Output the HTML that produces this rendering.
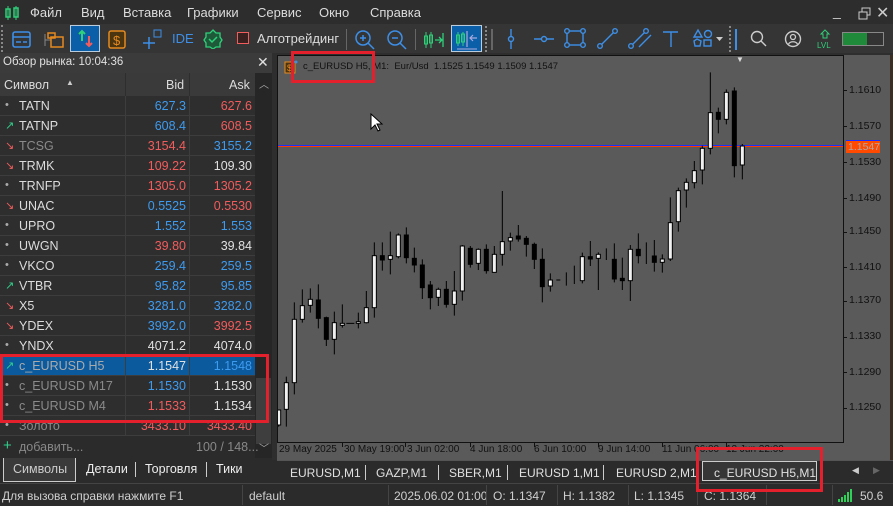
<!DOCTYPE html>
<html><head><meta charset="utf-8"><style>
*{margin:0;padding:0;box-sizing:border-box}
body{width:893px;height:506px;overflow:hidden;background:#2b2b2b;font-family:"Liberation Sans","DejaVu Sans",sans-serif;font-size:12px;color:#dcdcdc;position:relative}
.a{position:absolute;white-space:nowrap}
.menu span{position:absolute;top:5px;font-size:13px;color:#dcdcdc}
.row{position:absolute;left:0;width:255px;height:20px;border-bottom:1px solid #3d3d3d;background:#2e2e2e}
.row .s{position:absolute;left:19px;top:3px;font-size:12.5px}
.row .b{position:absolute;right:69px;top:3px;font-size:12.5px}
.row .k{position:absolute;right:3px;top:3px;font-size:12.5px}
.row .i{position:absolute;left:5px;top:3px;font-size:11px}
.row:before{content:"";position:absolute;left:125px;top:0;width:1px;height:20px;background:#3d3d3d}
.row:after{content:"";position:absolute;left:189px;top:0;width:1px;height:20px;background:#3d3d3d}
.bl{color:#3d9bf0}.rd{color:#f25c5c}.wh{color:#e0e0e0}.gr{color:#8a8a8a}
.dot{color:#aaa}.up{color:#2fcf8a}.dn{color:#f25c5c}
.pl{position:absolute;left:849px;font-size:10.5px;color:#111;font-family:"Liberation Sans",sans-serif}
.tl{position:absolute;top:444px;font-size:10px;color:#111;font-family:"Liberation Sans",sans-serif}
.ct{position:absolute;top:466px;font-size:12px;color:#e0e0e0}
.st{position:absolute;top:489px;font-size:12px;color:#cfcfcf}
.red{position:absolute;border:3px solid #e3202b}
</style></head><body>
<!-- menu -->
<div class="a" style="left:0;top:0;width:893px;height:27px;background:#2d2d2d"></div>
<svg class="a" style="left:5px;top:6px" width="14" height="14"><rect x="1" y="3" width="4" height="8" fill="none" stroke="#2fd07a" stroke-width="1.5"/><rect x="9" y="2" width="4" height="9" fill="none" stroke="#2fd07a" stroke-width="1.5"/><path d="M3 0v14M11 0v14" stroke="#2fd07a"/></svg>
<div class="menu"><span style="left:30px">Файл</span><span style="left:81px">Вид</span><span style="left:123px">Вставка</span><span style="left:187px">Графики</span><span style="left:257px">Сервис</span><span style="left:319px">Окно</span><span style="left:370px">Справка</span></div>
<div class="a" style="left:833px;top:3px;font-size:14px;color:#ccc">_</div>
<svg class="a" style="left:858px;top:7px" width="14" height="14"><rect x="4" y="1" width="8" height="7" fill="none" stroke="#ccc"/><rect x="1" y="5" width="8" height="7" fill="#2d2d2d" stroke="#ccc"/></svg>
<div class="a" style="left:876px;top:3px;font-size:16px;color:#ccc">✕</div>
<!-- toolbar -->
<div class="a" style="left:0;top:24px;width:893px;height:29px;background:#353535"></div>
<div class="a" style="left:1px;top:25px;height:27px;border-left:2px dotted #888"></div>
<svg class="a" style="left:12px;top:30px" width="20" height="20"><rect x="1" y="2" width="17" height="15" rx="2" fill="none" stroke="#3d8fe8" stroke-width="1.6"/><path d="M1 7h17M4 12h5M11 12h4" stroke="#3d8fe8" stroke-width="1.6"/></svg>
<svg class="a" style="left:43px;top:30px" width="22" height="20"><path d="M2 4v12M2 10h6" stroke="#888"/><rect x="8" y="7" width="12" height="10" fill="none" stroke="#e58a1f" stroke-width="1.5"/><rect x="5" y="3" width="7" height="5" fill="none" stroke="#e58a1f" stroke-width="1.5"/></svg>
<div class="a" style="left:70px;top:25px;width:30px;height:27px;background:#0b5ea8;border:1px solid #bcd"></div>
<svg class="a" style="left:76px;top:29px" width="20" height="20"><path d="M6 2v10M3 5l3-3 3 3" stroke="#2fd07a" stroke-width="2" fill="none"/><path d="M13 7v10M10 14l3 3 3-3" stroke="#f25c5c" stroke-width="2" fill="none"/></svg>
<svg class="a" style="left:108px;top:30px" width="20" height="20"><rect x="1" y="1" width="16" height="17" rx="2" fill="#4a3510" stroke="#e58a1f" stroke-width="1.5"/><text x="5" y="15" font-size="13" fill="#e58a1f" font-family="Liberation Sans">$</text></svg>
<svg class="a" style="left:142px;top:29px" width="22" height="22"><path d="M1 14h12M7 8v12" stroke="#3d8fe8" stroke-width="1.5"/><rect x="12" y="1" width="7" height="7" fill="none" stroke="#3d8fe8"/></svg>
<div class="a" style="left:172px;top:31px;font-size:13px;color:#3d8fe8">IDE</div>
<svg class="a" style="left:203px;top:29px" width="20" height="20"><path d="M10 1l3 3h4v4l2 3-2 3v4h-4l-3 2-3-2H3v-4l-2-3 2-3V4h4z" fill="#1e5a3a" stroke="#2fd07a" stroke-width="1.3"/><path d="M6 10l3 3 5-5" stroke="#2fd07a" stroke-width="1.5" fill="none"/></svg>
<div class="a" style="left:237px;top:32px;width:12px;height:12px;border:1.5px solid #f25c5c;background:#3b2020"></div>
<div class="a" style="left:257px;top:31px;font-size:13px;color:#dcdcdc">Алготрейдинг</div>
<div class="a" style="left:346px;top:29px;width:1px;height:21px;background:#666"></div>
<svg class="a" style="left:354px;top:29px" width="22" height="22"><circle cx="9" cy="9" r="7" fill="none" stroke="#3d8fe8" stroke-width="1.5"/><path d="M14 14l6 6M6 9h6M9 6v6" stroke="#3d8fe8" stroke-width="1.5"/></svg>
<svg class="a" style="left:386px;top:29px" width="22" height="22"><circle cx="9" cy="9" r="7" fill="none" stroke="#3d8fe8" stroke-width="1.5"/><path d="M14 14l6 6M6 9h6" stroke="#3d8fe8" stroke-width="1.5"/></svg>
<div class="a" style="left:415px;top:29px;width:1px;height:21px;background:#666"></div>
<svg class="a" style="left:423px;top:29px" width="22" height="22"><path d="M3 3v16M8 3v16" stroke="#2fd07a"/><rect x="1.5" y="7" width="3" height="8" fill="none" stroke="#2fd07a"/><rect x="6.5" y="6" width="3" height="8" fill="none" stroke="#2fd07a"/><path d="M12 11h7M16 8l3 3-3 3M20 4v14" stroke="#2fd07a" stroke-width="1.3" fill="none"/></svg>
<div class="a" style="left:451px;top:25px;width:31px;height:27px;background:#0b5ea8;border:1px solid #bcd"></div>
<svg class="a" style="left:455px;top:29px" width="24" height="22"><path d="M3 3v14M8 3v14" stroke="#2fd07a"/><rect x="1.5" y="6" width="3" height="8" fill="none" stroke="#2fd07a"/><rect x="6.5" y="5" width="3" height="8" fill="none" stroke="#2fd07a"/><path d="M12 2v16M15 9h7M18 6l-3 3 3 3" stroke="#aad" stroke-width="1.2" fill="none"/><path d="M2 20h20" stroke="#aad"/></svg>
<div class="a" style="left:485px;top:26px;height:26px;border-left:2px dotted #888"></div>
<div class="a" style="left:491px;top:29px;width:2px;height:21px;background:#666"></div>
<svg class="a" style="left:500px;top:27px" width="350" height="24"><g stroke="#3d8fe8" stroke-width="1.4" fill="none">
<path d="M11 2v20"/><circle cx="11" cy="12" r="2.5" fill="#353535"/>
<path d="M34 12h20"/><circle cx="44" cy="12" r="2.5" fill="#353535"/>
<rect x="67" y="4" width="16" height="14"/><circle cx="67" cy="4" r="2.3" fill="#353535"/><circle cx="83" cy="4" r="2.3" fill="#353535"/><circle cx="67" cy="18" r="2.3" fill="#353535"/><circle cx="83" cy="18" r="2.3" fill="#353535"/>
<path d="M100 19l15-15"/><circle cx="100" cy="19" r="2.3" fill="#353535"/><circle cx="115" cy="4" r="2.3" fill="#353535"/>
<path d="M131 19l15-15M139 20l12-12"/><circle cx="131" cy="19" r="2.3" fill="#353535"/><circle cx="146" cy="4" r="2.3" fill="#353535"/>
<path d="M163 5h15M171 5v15"/>
<path d="M194 10l4-7 4 7z"/><circle cx="208" cy="7" r="3.5"/><path d="M194 14l3-2 4 2-1 5h-5z"/><rect x="204" y="13" width="7" height="6"/>
</g><path d="M216 10h7l-3.5 4z" fill="#ccc"/></svg>
<div class="a" style="left:729px;top:26px;height:26px;border-left:2px dotted #888"></div>
<div class="a" style="left:735px;top:29px;width:2px;height:21px;background:#3d8fe8"></div>
<svg class="a" style="left:750px;top:30px" width="18" height="18"><circle cx="7" cy="7" r="5.5" fill="none" stroke="#ccc" stroke-width="1.4"/><path d="M11 11l5 5" stroke="#ccc" stroke-width="1.4"/></svg>
<svg class="a" style="left:784px;top:30px" width="18" height="18"><circle cx="9" cy="9" r="7.5" fill="none" stroke="#ccc" stroke-width="1.4"/><circle cx="9" cy="7" r="2.5" fill="none" stroke="#ccc" stroke-width="1.3"/><path d="M4.5 14c2-3 7-3 9 0" stroke="#ccc" stroke-width="1.3" fill="none"/></svg>
<svg class="a" style="left:816px;top:29px" width="18" height="20"><path d="M9 1l4 4h-2v4H7V5H5z" fill="none" stroke="#2fd07a"/><text x="1" y="19" font-size="8" fill="#2fd07a" font-family="Liberation Sans">LVL</text></svg>
<div class="a" style="left:842px;top:32px;width:42px;height:14px;border:1px solid #888;background:#333"><div style="width:24px;height:12px;background:#1e8a3a"></div></div>
<!-- market watch -->
<div class="a" style="left:0;top:53px;width:272px;height:20px;background:#3b3b3b"></div>
<div class="a" style="left:3px;top:56px;font-size:11.5px;color:#e0e0e0">Обзор рынка: 10:04:36</div>
<div class="a" style="left:257px;top:54px;font-size:14px;color:#e0e0e0">✕</div>
<div class="a" style="left:0;top:73px;width:272px;height:23px;background:#3a3a3a"></div>
<div class="a" style="left:4px;top:78px;font-size:12.5px">Символ</div>
<div class="a" style="left:66px;top:78px;font-size:8px;color:#ccc">▲</div>
<div class="a" style="left:125px;top:73px;width:1px;height:23px;background:#2e2e2e"></div>
<div class="a" style="left:189px;top:73px;width:1px;height:23px;background:#2e2e2e"></div>
<div class="a" style="left:166px;top:78px;font-size:12.5px">Bid</div>
<div class="a" style="left:229px;top:78px;font-size:12.5px">Ask</div>
<div class="a" style="left:255px;top:73px;width:17px;height:385px;background:#262626"></div>
<div class="a" style="left:259px;top:76px;font-size:10px;color:#aaa">︿</div>
<div class="a" style="left:256px;top:378px;width:15px;height:66px;background:#3e3e3e"></div>
<div class="a" style="left:259px;top:440px;font-size:10px;color:#aaa">﹀</div>

<div class="row" style="top:96px"><span class="i dot">•</span><span class="s">TATN</span><span class="b bl">627.3</span><span class="k rd">627.6</span></div>
<div class="row" style="top:116px"><span class="i up">↗</span><span class="s">TATNP</span><span class="b bl">608.4</span><span class="k rd">608.5</span></div>
<div class="row" style="top:136px"><span class="i dn">↘</span><span class="s gr">TCSG</span><span class="b rd">3154.4</span><span class="k bl">3155.2</span></div>
<div class="row" style="top:156px"><span class="i dn">↘</span><span class="s">TRMK</span><span class="b rd">109.22</span><span class="k wh">109.30</span></div>
<div class="row" style="top:176px"><span class="i dot">•</span><span class="s">TRNFP</span><span class="b rd">1305.0</span><span class="k rd">1305.2</span></div>
<div class="row" style="top:196px"><span class="i dn">↘</span><span class="s">UNAC</span><span class="b bl">0.5525</span><span class="k rd">0.5530</span></div>
<div class="row" style="top:216px"><span class="i dot">•</span><span class="s">UPRO</span><span class="b bl">1.552</span><span class="k bl">1.553</span></div>
<div class="row" style="top:236px"><span class="i dot">•</span><span class="s">UWGN</span><span class="b rd">39.80</span><span class="k wh">39.84</span></div>
<div class="row" style="top:256px"><span class="i dot">•</span><span class="s">VKCO</span><span class="b bl">259.4</span><span class="k bl">259.5</span></div>
<div class="row" style="top:276px"><span class="i up">↗</span><span class="s">VTBR</span><span class="b bl">95.82</span><span class="k bl">95.85</span></div>
<div class="row" style="top:296px"><span class="i dn">↘</span><span class="s">X5</span><span class="b bl">3281.0</span><span class="k bl">3282.0</span></div>
<div class="row" style="top:316px"><span class="i dn">↘</span><span class="s">YDEX</span><span class="b bl">3992.0</span><span class="k rd">3992.5</span></div>
<div class="row" style="top:336px"><span class="i dot">•</span><span class="s">YNDX</span><span class="b wh">4071.2</span><span class="k wh">4074.0</span></div>
<div class="row" style="top:356px;background:#0b5a9e"><span class="i up">↗</span><span class="s" style="color:#aaa">c_EURUSD H5</span><span class="b wh">1.1547</span><span class="k bl">1.1548</span></div>
<div class="row" style="top:376px"><span class="i dot">•</span><span class="s gr">c_EURUSD M17</span><span class="b bl">1.1530</span><span class="k wh">1.1530</span></div>
<div class="row" style="top:396px"><span class="i dot">•</span><span class="s gr">c_EURUSD M4</span><span class="b rd">1.1533</span><span class="k wh">1.1534</span></div>
<div class="row" style="top:416px"><span class="i dot">•</span><span class="s gr">Золото</span><span class="b rd">3433.10</span><span class="k rd">3433.40</span></div>
<div class="a" style="left:0;top:436px;width:255px;height:22px;background:#2b2b2b"></div>
<div class="a" style="left:3px;top:437px;font-size:15px;color:#2fcf8a">+</div>
<div class="a" style="left:19px;top:440px;font-size:12.5px;color:#888">добавить...</div>
<div class="a" style="left:196px;top:440px;font-size:12.5px;color:#888">100 / 148...</div>
<!-- bottom tabs -->
<div class="a" style="left:0;top:458px;width:272px;height:24px;background:#2b2b2b"></div>
<div class="a" style="left:3px;top:458px;width:73px;height:24px;background:#3a3a3a;border:1px solid #ccc;border-top:none"></div>
<div class="a" style="left:13px;top:462px;font-size:12.5px;color:#ccc">Символы</div>
<div class="a" style="left:86px;top:462px;font-size:12.5px;color:#eee">Детали</div>
<div class="a" style="left:135px;top:462px;width:1px;height:15px;background:#ccc"></div>
<div class="a" style="left:145px;top:462px;font-size:12.5px;color:#eee">Торговля</div>
<div class="a" style="left:206px;top:462px;width:1px;height:15px;background:#ccc"></div>
<div class="a" style="left:216px;top:462px;font-size:12.5px;color:#eee">Тики</div>
<!-- chart -->
<div class="a" style="left:272px;top:53px;width:621px;height:407px;background:#2e2e2e"></div>
<div class="a" style="left:277px;top:55px;width:613px;height:405px;background:#5a5a5a"></div>
<div class="a" style="left:890px;top:55px;width:3px;height:405px;background:#3b2e25"></div>
<div class="a" style="left:843px;top:55px;width:1px;height:388px;background:#111"></div>
<div class="a" style="left:277px;top:55px;width:567px;height:1px;background:#111"></div>
<div class="a" style="left:277px;top:55px;width:1px;height:388px;background:#111"></div>
<div class="a" style="left:277px;top:442px;width:567px;height:1px;background:#111"></div>
<div class="a" style="left:736px;top:55px;font-size:8px;color:#ddd">▼</div>
<svg class="a" style="left:284px;top:60px" width="14" height="14"><rect x="1" y="2" width="10" height="11" fill="#4a3510" stroke="#e58a1f"/><text x="3" y="11" font-size="9" fill="#e58a1f">$</text><circle cx="12" cy="2" r="1.5" fill="#3d8fe8"/></svg>
<div class="a" style="left:303px;top:61px;font-size:9.5px;color:#111">c_EURUSD H5, M1:&nbsp; Eur/Usd&nbsp; 1.1525 1.1549 1.1509 1.1547</div>
<svg class="a" style="left:370px;top:113px" width="14" height="20"><path d="M1 1v15l4-4 3 6 2-1-3-6h5z" fill="#fff" stroke="#000"/></svg>
<div class="a" style="left:278px;top:145px;width:565px;height:1px;background:#1a2fff"></div>
<div class="a" style="left:278px;top:146px;width:565px;height:1px;background:#ff3a00"></div>
<div class="a" style="left:846px;top:140px;width:34px;height:1px;background:#1a2fff"></div>
<div class="a" style="left:846px;top:141px;width:34px;height:12px;background:#ff4a00;color:#aaa;font-size:10.5px;padding-left:2px;line-height:12px">1.1547</div>
<svg class="a" style="left:278px;top:60px" width="480" height="380" viewBox="0 0 1440 1140" stroke="#000" stroke-width="3">
<path d="M2 1050V1100M25 950V1100M49 727V1003M73 688V788M97 685V758M121 673V805M145 770V858M169 755V883M193 733V803M205 790H229M241 758V805M265 693V790M289 547V773M313 547V632M337 515V643M361 520V595M385 502V610M409 563V637M433 598V717M457 663V748M481 683V738M505 663V743M529 633V767M553 555V722M577 558V623M601 565V630M625 553V641M649 558V637M673 393V617M697 518V572M721 495V545M745 528V590M769 548V627M793 565V727M817 640V695M835 660H847M865 637V677M889 617V672M913 578V670M937 543V618M961 577V690M985 565V600M1009 550V667M1033 593V690M1057 555V723M1081 520V610M1105 547V612M1129 540V635M1153 583V638M1177 412V603M1201 383V515M1225 355V443M1249 303V385M1273 257V373M1297 37V283M1321 143V220M1345 88V193M1369 82V352M1393 252V358"/>
<g fill="#f0f0f0">
<rect x="-4" y="1050" width="12" height="45"/><rect x="19" y="968" width="12" height="80"/><rect x="43" y="778" width="12" height="190"/><rect x="67" y="737" width="12" height="41"/><rect x="91" y="718" width="12" height="18"/><rect x="163" y="788" width="12" height="50"/><rect x="187" y="790" width="12" height="6"/><rect x="235" y="785" width="12" height="5"/><rect x="259" y="743" width="12" height="45"/><rect x="283" y="587" width="12" height="156"/><rect x="331" y="587" width="12" height="11"/><rect x="355" y="525" width="12" height="65"/><rect x="475" y="688" width="12" height="24"/><rect x="523" y="693" width="12" height="40"/><rect x="547" y="558" width="12" height="135"/><rect x="595" y="568" width="12" height="42"/><rect x="643" y="583" width="12" height="54"/><rect x="667" y="545" width="12" height="38"/><rect x="691" y="533" width="12" height="10"/><rect x="811" y="660" width="12" height="18"/><rect x="907" y="590" width="12" height="72"/><rect x="955" y="583" width="12" height="12"/><rect x="1051" y="568" width="12" height="94"/><rect x="1147" y="597" width="12" height="10"/><rect x="1171" y="488" width="12" height="109"/><rect x="1195" y="392" width="12" height="93"/><rect x="1219" y="367" width="12" height="23"/><rect x="1243" y="332" width="12" height="36"/><rect x="1267" y="265" width="12" height="65"/><rect x="1291" y="158" width="12" height="107"/><rect x="1339" y="97" width="12" height="81"/><rect x="1387" y="258" width="12" height="57"/>
</g>
<g fill="#000">
<rect x="115" y="720" width="12" height="55"/><rect x="139" y="773" width="12" height="65"/><rect x="307" y="587" width="12" height="13"/><rect x="379" y="525" width="12" height="68"/><rect x="403" y="595" width="12" height="20"/><rect x="427" y="615" width="12" height="68"/><rect x="451" y="675" width="12" height="38"/><rect x="499" y="688" width="12" height="45"/><rect x="571" y="565" width="12" height="48"/><rect x="619" y="568" width="12" height="64"/><rect x="715" y="528" width="12" height="9"/><rect x="739" y="535" width="12" height="18"/><rect x="763" y="553" width="12" height="45"/><rect x="787" y="598" width="12" height="82"/><rect x="931" y="590" width="12" height="7"/><rect x="1003" y="598" width="12" height="59"/><rect x="1027" y="655" width="12" height="7"/><rect x="1075" y="568" width="12" height="19"/><rect x="1123" y="588" width="12" height="19"/><rect x="1315" y="157" width="12" height="21"/><rect x="1363" y="93" width="12" height="224"/>
</g></svg>
<!-- price scale -->
<div class="a" style="left:843px;top:90px;width:4px;height:1px;background:#111"></div><div class="pl" style="top:84px">1.1610</div>
<div class="a" style="left:843px;top:126px;width:4px;height:1px;background:#111"></div><div class="pl" style="top:120px">1.1570</div>
<div class="a" style="left:843px;top:162px;width:4px;height:1px;background:#111"></div><div class="pl" style="top:156px">1.1530</div>
<div class="a" style="left:843px;top:198px;width:4px;height:1px;background:#111"></div><div class="pl" style="top:192px">1.1490</div>
<div class="a" style="left:843px;top:232px;width:4px;height:1px;background:#111"></div><div class="pl" style="top:225px">1.1450</div>
<div class="a" style="left:843px;top:267px;width:4px;height:1px;background:#111"></div><div class="pl" style="top:261px">1.1410</div>
<div class="a" style="left:843px;top:301px;width:4px;height:1px;background:#111"></div><div class="pl" style="top:294px">1.1370</div>
<div class="a" style="left:843px;top:337px;width:4px;height:1px;background:#111"></div><div class="pl" style="top:330px">1.1330</div>
<div class="a" style="left:843px;top:372px;width:4px;height:1px;background:#111"></div><div class="pl" style="top:366px">1.1290</div>
<div class="a" style="left:843px;top:408px;width:4px;height:1px;background:#111"></div><div class="pl" style="top:401px">1.1250</div>
<!-- time axis -->
<div class="tl" style="left:279px">29 May 2025</div>
<div class="a" style="left:342px;top:442px;width:1px;height:5px;background:#111"></div><div class="tl" style="left:344px">30 May 19:00</div>
<div class="a" style="left:405px;top:442px;width:1px;height:5px;background:#111"></div><div class="tl" style="left:407px">3 Jun 02:00</div>
<div class="a" style="left:470px;top:442px;width:1px;height:5px;background:#111"></div><div class="tl" style="left:470px">4 Jun 18:00</div>
<div class="a" style="left:534px;top:442px;width:1px;height:5px;background:#111"></div><div class="tl" style="left:534px">6 Jun 10:00</div>
<div class="a" style="left:598px;top:442px;width:1px;height:5px;background:#111"></div><div class="tl" style="left:598px">9 Jun 14:00</div>
<div class="a" style="left:662px;top:442px;width:1px;height:5px;background:#111"></div><div class="tl" style="left:662px">11 Jun 06:00</div>
<div class="a" style="left:726px;top:442px;width:1px;height:5px;background:#111"></div><div class="tl" style="left:726px">12 Jun 22:00</div>
<!-- chart tabs -->
<div class="a" style="left:277px;top:460px;width:616px;height:23px;background:#2b2b2b;border-top:1px solid #555"></div>
<div class="ct" style="left:290px">EURUSD,M1</div>
<div class="a" style="left:365px;top:465px;width:1px;height:15px;background:#ccc"></div>
<div class="ct" style="left:376px">GAZP,M1</div>
<div class="a" style="left:438px;top:465px;width:1px;height:15px;background:#ccc"></div>
<div class="ct" style="left:449px">SBER,M1</div>
<div class="a" style="left:507px;top:465px;width:1px;height:15px;background:#ccc"></div>
<div class="ct" style="left:519px">EURUSD 1,M1</div>
<div class="a" style="left:603px;top:465px;width:1px;height:15px;background:#ccc"></div>
<div class="ct" style="left:616px">EURUSD 2,M1</div>
<div class="a" style="left:702px;top:461px;width:115px;height:20px;border:1px solid #ccc;background:#363636"></div>
<div class="ct" style="left:714px">c_EURUSD H5,M1</div>
<div class="a" style="left:852px;top:465px;font-size:9px;color:#ccc">◀</div>
<div class="a" style="left:873px;top:465px;font-size:9px;color:#666">▶</div>
<!-- status -->
<div class="a" style="left:0;top:483px;width:893px;height:23px;background:#2b2b2b;border-top:1px solid #444"></div>
<div class="st" style="left:2px">Для вызова справки нажмите F1</div>
<div class="a" style="left:242px;top:485px;width:1px;height:20px;background:#444"></div>
<div class="st" style="left:249px">default</div>
<div class="a" style="left:388px;top:485px;width:1px;height:20px;background:#444"></div>
<div class="st" style="left:394px">2025.06.02 01:00</div>
<div class="a" style="left:486px;top:485px;width:1px;height:20px;background:#444"></div>
<div class="st" style="left:493px">O: 1.1347</div>
<div class="a" style="left:557px;top:485px;width:1px;height:20px;background:#444"></div>
<div class="st" style="left:563px">H: 1.1382</div>
<div class="a" style="left:628px;top:485px;width:1px;height:20px;background:#444"></div>
<div class="st" style="left:634px">L: 1.1345</div>
<div class="a" style="left:697px;top:485px;width:1px;height:20px;background:#444"></div>
<div class="st" style="left:704px">C: 1.1364</div>
<div class="a" style="left:766px;top:485px;width:1px;height:20px;background:#444"></div>
<div class="a" style="left:832px;top:485px;width:1px;height:20px;background:#444"></div>
<svg class="a" style="left:838px;top:489px" width="18" height="13"><g fill="#2fcf5a"><rect x="0" y="10" width="2" height="3"/><rect x="3" y="8" width="2" height="5"/><rect x="6" y="6" width="2" height="7"/><rect x="9" y="3" width="2" height="10"/><rect x="12" y="0" width="2" height="13"/></g></svg>
<div class="st" style="left:860px">50.6</div>
<!-- red highlights -->
<div class="red" style="left:291px;top:51px;width:84px;height:32px"></div>
<div class="red" style="left:0;top:354px;width:269px;height:69px"></div>
<div class="red" style="left:696px;top:447px;width:127px;height:45px"></div>
</body></html>
